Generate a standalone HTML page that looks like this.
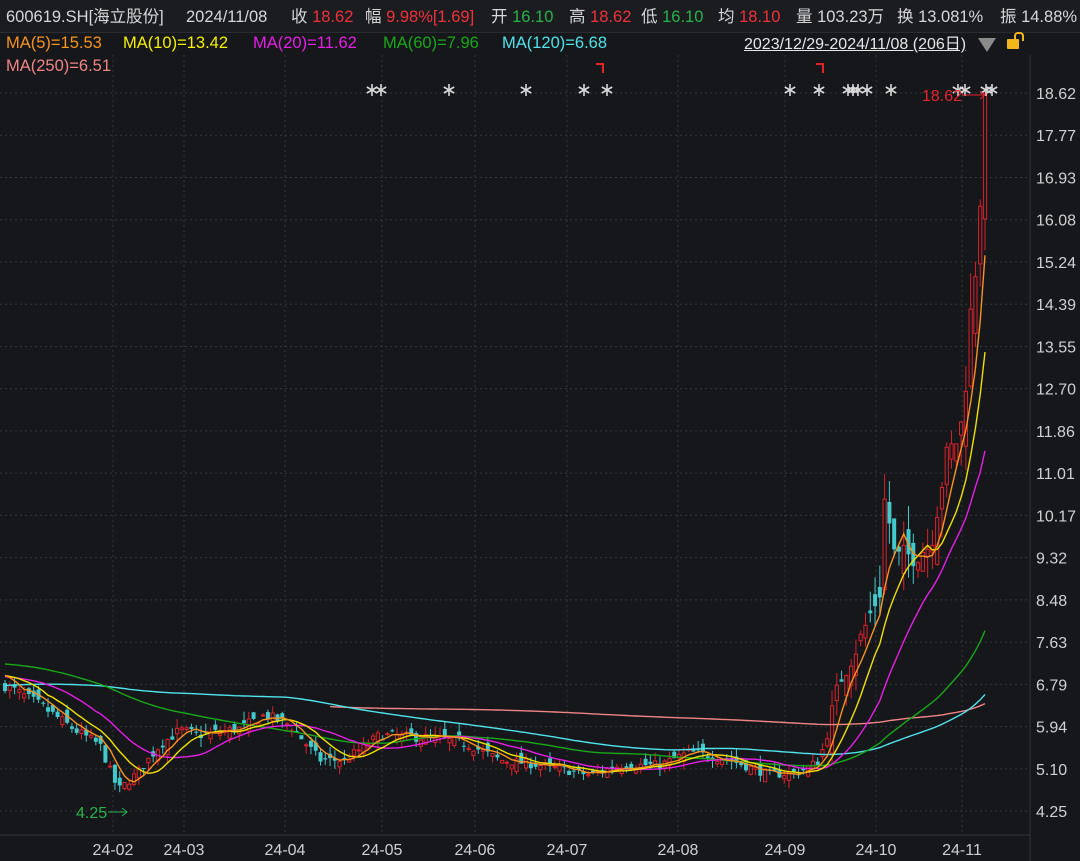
<!DOCTYPE html>
<html><head><meta charset="utf-8">
<style>
html,body{margin:0;padding:0;background:#16171b;width:1080px;height:861px;overflow:hidden;font-family:"Liberation Sans","Noto Sans CJK SC",sans-serif;}
#hdr{position:absolute;left:0;top:0;width:1080px;height:32px;background:#1b1c20;border-bottom:1px solid #2a2b30;font-size:16.5px;color:#d6d6d6;white-space:nowrap;}
#hdr span,#ma span{position:absolute;top:0;line-height:34px}
.r{color:#f0313a}.g{color:#27b24a}
#ma{position:absolute;left:0;top:33px;font-size:16.5px;white-space:nowrap;width:740px;height:50px}
#ma span{line-height:21px}
svg{position:absolute;left:0;top:0}
</style></head><body>
<svg id="s" width="1080" height="861"></svg>
<div id="hdr">
<span style="left:6px">600619.SH[海立股份]</span>
<span style="left:186px">2024/11/08</span>
<span style="left:291px">收 <b class="r" style="font-weight:normal">18.62</b></span>
<span style="left:365px">幅 <b class="r" style="font-weight:normal">9.98%[1.69]</b></span>
<span style="left:491px">开 <b class="g" style="font-weight:normal">16.10</b></span>
<span style="left:569px">高 <b class="r" style="font-weight:normal">18.62</b></span>
<span style="left:641px">低 <b class="g" style="font-weight:normal">16.10</b></span>
<span style="left:718px">均 <b class="r" style="font-weight:normal">18.10</b></span>
<span style="left:796px">量 103.23万</span>
<span style="left:897px">换 13.081%</span>
<span style="left:1000px">振 14.88%</span>
</div>
<div id="ma"><span style="left:6px;color:#f7931e">MA(5)=15.53</span><span style="left:123px;color:#f5f000">MA(10)=13.42</span><span style="left:253px;color:#e61ee6">MA(20)=11.62</span><span style="left:383px;color:#18a818">MA(60)=7.96</span><span style="left:502px;color:#4fe3ea">MA(120)=6.68</span><span style="left:6px;top:23px;color:#f08585">MA(250)=6.51</span></div>
<div style="position:absolute;left:744px;top:34px;font-size:16px;color:#e6e6e6;text-decoration:underline;line-height:21px;white-space:nowrap">2023/12/29-2024/11/08 (206日)</div>
<div style="position:absolute;left:978px;top:38px;width:0;height:0;border-left:9px solid transparent;border-right:9px solid transparent;border-top:14px solid #8a8a8a"></div>
<div style="position:absolute;left:1007px;top:39px;width:12px;height:10px;background:#f2b51c;border-radius:1px"></div>
<div style="position:absolute;left:1014px;top:32px;width:6px;height:7px;border:2px solid #f2b51c;border-bottom:none;border-radius:4px 4px 0 0"></div>
<script>
const S=document.getElementById('s');let h='';
const Y=p=>93+(18.62-p)*49.97;
const prices=['18.62','17.77','16.93','16.08','15.24','14.39','13.55','12.70','11.86','11.01','10.17','9.32','8.48','7.63','6.79','5.94','5.10','4.25'];
prices.forEach((p,k)=>{const y=93+k*42.24;h+=`<line x1="0" x2="1030" y1="${y}" y2="${y}" stroke="#34363c" stroke-dasharray="2,3"/>`;h+=`<text x="1036" y="${y+6}" fill="#d0d0d0" font-size="16" font-family="Liberation Sans">${p}</text>`;});
const months=[[113,'24-02'],[184,'24-03'],[285,'24-04'],[382,'24-05'],[475,'24-06'],[567,'24-07'],[678,'24-08'],[785,'24-09'],[876,'24-10'],[962,'24-11']];
months.forEach(([x,t])=>{h+=`<line x1="${x}" x2="${x}" y1="55" y2="835" stroke="#34363c" stroke-dasharray="2,3"/><text x="${x}" y="855" fill="#cfcfcf" font-size="16" text-anchor="middle" font-family="Liberation Sans">${t}</text>`;});
h+=`<line x1="1030" x2="1030" y1="55" y2="861" stroke="#34363c"/><line x1="0" x2="1030" y1="835" y2="835" stroke="#34363c"/>`;
const kp=[[5,6.77],[40,6.37],[75,5.87],[100,5.57],[118,4.67],[130,4.87],[140,5.07],[160,5.57],[180,5.87],[200,5.77],[240,5.9],[265,6.17],[290,5.97],[320,5.27],[345,5.27],[380,5.77],[440,5.7],[470,5.57],[500,5.27],[540,5.17],[590,4.97],[620,5.17],[660,5.17],[690,5.43],[730,5.27],[770,4.97],[800,5.03],[820,5.27],[840,6.87],[860,7.67],[880,8.67],[885,10.6],[895,9.27],[910,9.37],[930,9.57],[945,11.2],[955,11.6],[962,12.0],[970,14.0],[976,15.3],[981,16.9],[985,18.62]];
const N=206,dx=(985-5)/(N-1);const X=i=>5+i*dx;
function interp(x){for(let k=0;k<kp.length-1;k++){if(x<=kp[k+1][0]){const[a,b]=kp[k],[c,d]=kp[k+1];return b+(d-b)*(x-a)/(c-a);}}return 18.62;}
let seed=7;const rnd=()=>{seed=(seed*16807)%2147483647;return seed/2147483647;};
const C=[],O=[],H=[],L=[];
for(let i=0;i<N;i++){const base=interp(X(i));const vol=base*(i>170?0.06:0.035);let c=base+(rnd()-0.5)*vol;if(i==N-1)c=18.62;C.push(c);
let o=(i?C[i-1]:c)+(rnd()-0.5)*vol*1.6;if(i==N-1)o=16.1;if(i==N-2)o=15.2;O.push(o);
H.push(Math.max(o,c)+rnd()*vol*0.9);L.push(Math.min(o,c)-rnd()*vol*0.9);}
H[N-1]=18.62;
const pre=[];for(let i=0;i<250;i++){let v;if(i<130)v=6.1+0.2*Math.sin(i/9);else if(i<190)v=6.2+(i-130)*0.004;else v=7.2+0.3*Math.sin((i-190)/10);pre.push(v);}
const all=pre.concat(C);
function ma(n){const r=[];for(let i=0;i<N;i++){let s=0;for(let j=0;j<n;j++)s+=all[250+i-j];r.push(s/n);}return r;}
function line(arr,col,start){let d='';for(let i=start;i<N;i++)d+=(i==start?'M':'L')+X(i).toFixed(1)+','+Y(arr[i]).toFixed(1);return `<path d="${d}" fill="none" stroke="${col}" stroke-width="1.4"/>`;}
for(let i=0;i<N;i++){const x=X(i),up=C[i]>=O[i];const col=up?'#d9222a':'#43c8cc';const t=Y(Math.max(O[i],C[i])),b=Y(Math.min(O[i],C[i]));const bh=Math.max(1,b-t);
h+=`<line x1="${x}" x2="${x}" y1="${Y(H[i])}" y2="${Y(L[i])}" stroke="${col}" stroke-width="1"/>`;
if(up)h+=`<rect x="${x-1.6}" y="${t}" width="3.2" height="${bh}" fill="#16171b" stroke="${col}" stroke-width="1"/>`;else h+=`<rect x="${x-2}" y="${t}" width="4" height="${bh}" fill="${col}"/>`;}
h+=line(ma(250),'#f08585',68);
h+=line(ma(120),'#4fe3ea',0);h+=line(ma(60),'#18a818',0);h+=line(ma(20),'#e61ee6',0);h+=line(ma(10),'#f0e000',0);h+=line(ma(5),'#f7931e',0);
function star(x,y){let s='';for(let a=0;a<3;a++){const t=a*Math.PI/3+Math.PI/2;const c=Math.cos(t)*6,d=Math.sin(t)*6;s+=`<line x1="${x-c}" y1="${y-d}" x2="${x+c}" y2="${y+d}" stroke="#d8d8d8" stroke-width="1.6"/>`;}return s;}
[372,381,449,526,584,607,790,819,848,853,858,867,891,958,965,986,992].forEach(x=>{h+=star(x,90);});
[[596,64],[816,64]].forEach(([x,y])=>{h+=`<path d="M${x},${y}H${x+7}V${y+9}" fill="none" stroke="#e8222a" stroke-width="2"/>`;});
h+=`<text x="922" y="101" fill="#e8222a" font-size="16" font-family="Liberation Sans">18.62</text><path d="M962,95H985M980,91L985,95L980,99" stroke="#e8222a" fill="none"/>`;
h+=`<text x="76" y="818" fill="#27b24a" font-size="16" font-family="Liberation Sans">4.25</text><path d="M108,812H127M122,808L127,812L122,816" stroke="#27b24a" fill="none"/>`;
S.innerHTML=h;
</script>
</body></html>
